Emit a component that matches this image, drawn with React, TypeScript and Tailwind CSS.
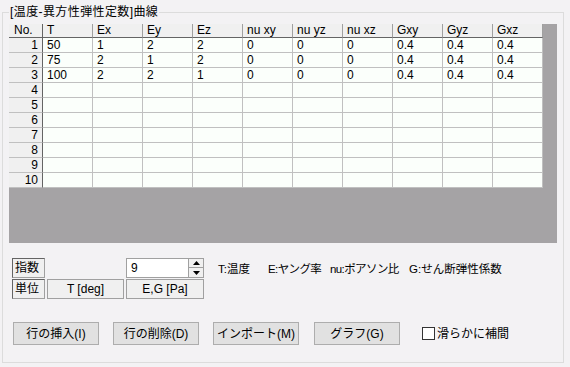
import React from 'react';

const cols = ['T', 'Ex', 'Ey', 'Ez', 'nu xy', 'nu yz', 'nu xz', 'Gxy', 'Gyz', 'Gxz'];

const rows: string[][] = [
  ['50', '1', '2', '2', '0', '0', '0', '0.4', '0.4', '0.4'],
  ['75', '2', '1', '2', '0', '0', '0', '0.4', '0.4', '0.4'],
  ['100', '2', '2', '1', '0', '0', '0', '0.4', '0.4', '0.4'],
  [], [], [], [], [], [], [],
];

const font = { fontFamily: '"Liberation Sans", "Noto Sans CJK JP", sans-serif' };

const App = () => {
  return (
    <div
      className="w-[570px] h-[367px] bg-[#f3f2f4] pt-[12px] pl-[2px] text-[12px] text-black overflow-hidden"
      style={font}
    >
      {/* group box */}
      <div className="relative w-[562px] h-[351px] border border-[#dcdcdc] pl-[6px] pt-[11px]">
        <span className="absolute left-[6px] -top-[9px] px-[1px] bg-[#f3f2f4] leading-[16px] tracking-[0.4px]">
          [温度-異方性弾性定数]曲線
        </span>

        {/* grid */}
        <div className="w-[548px] h-[219px] bg-[#a5a3a5]">
          {/* header */}
          <div className="flex h-[14px] leading-[13px]">
            <div className="w-[34px] bg-[#f0f0f0] border-r border-b border-[#646464] pl-[5px]">No.</div>
            {cols.map((c) => (
              <div key={c} className="w-[50px] bg-[#f0f0f0] border-r border-r-[#a0a0a0] border-b border-b-[#646464] pl-[4px]">
                {c}
              </div>
            ))}
          </div>
          {rows.map((r, i) => (
            <div key={i} className="flex h-[15px] leading-[14px]">
              <div className="w-[34px] bg-[#f0f0f0] border-r border-r-[#646464] border-b border-b-[#c0c0c0] text-right pr-[4px]">
                {i + 1}
              </div>
              {cols.map((c, j) => (
                <div key={c} className="w-[50px] bg-[#fbfffb] border-r border-b border-[#c0c0c0] pl-[4px]">
                  {r[j] ?? ''}
                </div>
              ))}
            </div>
          ))}
        </div>

        {/* index / unit */}
        <div className="flex items-start mt-[15px] ml-[3px]">
          <div className="flex flex-col gap-[1px]">
            <div className="flex gap-[2px]">
              <div className="w-[33px] h-[20px] bg-[#f0f0f0] border border-[#a0a0a0] border-t-[#646464] border-l-[#646464] pl-[2px] leading-[18px]">指数</div>
              <div className="w-[77px]" />
              <div className="flex w-[78px] h-[20px] border border-[#a0a0a0] bg-white">
                <div className="flex-1 pl-[4px] leading-[18px]">9</div>
                <div className="flex flex-col w-[15px] bg-[#f0f0f0] border-l border-[#a0a0a0]">
                  <div className="h-[9px] flex items-center justify-center border-b border-[#a0a0a0]">
                    <svg width="7" height="4" viewBox="0 0 7 4"><path d="M3.5 0L7 4H0z" fill="#000" /></svg>
                  </div>
                  <div className="h-[9px] flex items-center justify-center">
                    <svg width="7" height="4" viewBox="0 0 7 4"><path d="M0 0h7L3.5 4z" fill="#000" /></svg>
                  </div>
                </div>
              </div>
            </div>
            <div className="flex gap-[2px]">
              <div className="w-[33px] h-[20px] bg-[#f0f0f0] border border-[#a0a0a0] border-t-[#646464] border-l-[#646464] pl-[2px] leading-[18px]">単位</div>
              <div className="w-[77px] h-[20px] bg-[#f0f0f0] border border-[#a0a0a0] text-center leading-[18px]">T [deg]</div>
              <div className="w-[78px] h-[20px] bg-[#f0f0f0] border border-[#a0a0a0] text-center leading-[18px]">E,G [Pa]</div>
            </div>
          </div>
          <div className="flex ml-[14px] mt-[2px] leading-[18px] text-[11.5px] whitespace-nowrap">
            <span className="w-[50px]">T:温度</span>
            <span className="w-[62px] tracking-[-0.6px]">E:ヤング率</span>
            <span className="w-[79px] tracking-[-0.6px]">nu:ポアソン比</span>
            <span>G:せん断弾性係数</span>
          </div>
        </div>

        {/* buttons */}
        <div className="flex items-center mt-[23px] ml-[4px]">
          {['行の挿入(I)', '行の削除(D)', 'インポート(M)', 'グラフ(G)'].map((b, i) => (
            <button
              key={b}
              className={`w-[86px] h-[23px] bg-[#e1e1e1] border border-[#adadad] text-center leading-[20px] ${i === 3 ? 'ml-[15px]' : i > 0 ? 'ml-[14px]' : ''}`}
            >
              {b}
            </button>
          ))}
          <div className="flex items-center ml-[22px]">
            <div className="w-[13px] h-[13px] border border-[#333] bg-white" />
            <span className="ml-[2px]">滑らかに補間</span>
          </div>
        </div>
      </div>
    </div>
  );
};

export default App;
